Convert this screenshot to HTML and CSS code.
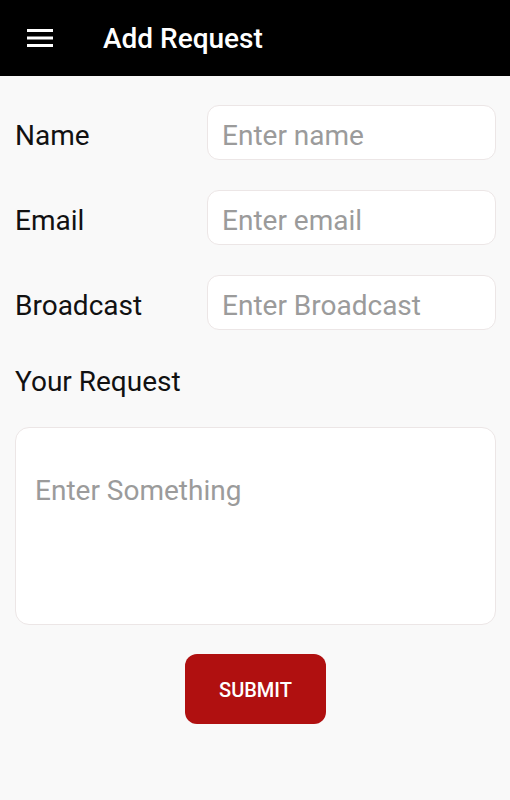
FILE: index.html
```html
<!DOCTYPE html>
<html lang="en">
<head>
    <meta charset="UTF-8">
    <meta name="viewport" content="width=device-width, initial-scale=1.0">
    <title>Add Request</title>
    <link rel="stylesheet" href="styles.css">
</head>
<body>
    <div class="toolbar">
        <button class="menu-button" aria-label="Menu">
            <svg width="26" height="20" viewBox="0 0 26 20">
                <rect x="0" y="1" width="26" height="3" fill="#fff" />
                <rect x="0" y="8.5" width="26" height="3" fill="#fff" />
                <rect x="0" y="16" width="26" height="3" fill="#fff" />
            </svg>
        </button>
        <h1 class="toolbar-title">Add Request</h1>
    </div>
    <form class="request-form">
        <div class="form-row">
            <label class="form-label" for="name-input">Name</label>
            <input class="form-input" type="text" id="name-input" placeholder="Enter name" />
        </div>
        <div class="form-row">
            <label class="form-label" for="email-input">Email</label>
            <input class="form-input" type="email" id="email-input" placeholder="Enter email" />
        </div>
        <div class="form-row">
            <label class="form-label" for="broadcast-input">Broadcast</label>
            <input class="form-input" type="text" id="broadcast-input" placeholder="Enter Broadcast" />
        </div>
        <label class="form-label request-label" for="request-input">Your Request</label>
        <textarea class="form-textarea" id="request-input" placeholder="Enter Something"></textarea>
        <div class="submit-row">
            <button type="button" class="submit-button">SUBMIT</button>
        </div>
    </form>
</body>
</html>
```

FILE: styles.css
```css
body {
    margin: 0;
    background-color: #f9f9f9;
    font-family: Roboto, "Noto Sans", sans-serif;
}
.toolbar {
    display: flex;
    align-items: center;
    height: 76px;
    padding-left: 27px;
    background-color: #000;
    color: #fff;
}
.menu-button {
    display: flex;
    padding: 0;
    border: none;
    background: none;
}
.toolbar-title {
    margin: 0 0 0 50px;
    font-size: 28px;
    font-weight: 500;
}
.request-form {
    display: flex;
    flex-direction: column;
    padding: 29px 14px 0 15px;
}
.form-row {
    display: flex;
    align-items: center;
    margin-bottom: 30px;
}
.form-row:nth-of-type(3) {
    margin-bottom: 35px;
}
.form-label {
    flex-shrink: 0;
    width: 192px;
    font-size: 28px;
    line-height: 33px;
    color: #111;
}
.form-row .form-label {
    padding-top: 5px;
}
.form-input {
    flex: 1;
    min-width: 0;
    box-sizing: border-box;
    height: 55px;
    padding: 5px 14px 0;
    border: 1px solid #ece6e6;
    border-radius: 12px;
    background-color: #fff;
    font-family: inherit;
    font-size: 28px;
    outline: none;
}
.form-input::placeholder,
.form-textarea::placeholder {
    color: #9b9b9b;
}
.request-label {
    width: auto;
}
.form-textarea {
    box-sizing: border-box;
    height: 198px;
    margin-top: 29px;
    padding: 46px 19px 0;
    border: 1px solid #ece6e6;
    border-radius: 14px;
    background-color: #fff;
    font-family: inherit;
    font-size: 28px;
    line-height: 33px;
    resize: none;
    outline: none;
}
.submit-row {
    display: flex;
    justify-content: center;
    margin-top: 29px;
}
.submit-button {
    width: 141px;
    height: 70px;
    padding-top: 3px;
    border: none;
    border-radius: 12px;
    background-color: #b01010;
    color: #fff;
    font-family: inherit;
    font-size: 20px;
    font-weight: 500;
}
```
